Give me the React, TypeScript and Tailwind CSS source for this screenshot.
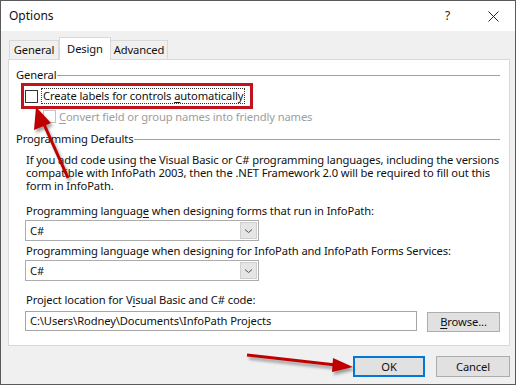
import React from 'react';

function Check({ disabled }: { disabled?: boolean }) {
  return (
    <div
      className={
        disabled
          ? 'w-[13px] h-[13px] shrink-0 border border-[#c4c4c4] bg-white'
          : 'w-[13px] h-[13px] shrink-0 border border-[#333333] bg-white'
      }
    />
  );
}

function GroupHeader({ title }: { title: string }) {
  return (
    <div className="flex items-center h-[14px] pl-[7px] pr-[9px]">
      <span className="whitespace-nowrap">{title}</span>
      <div className="flex-1 h-px bg-[#a0a0a0] ml-[1px]" />
    </div>
  );
}

function Combo({ value }: { value: string }) {
  return (
    <div className="flex items-center w-[234px] h-[21px] ml-[16px] border border-[#acacac] bg-white">
      <span className="flex-1 pl-[4px]">{value}</span>
      <div className="flex items-center justify-center w-[17px] h-[17px] mr-px bg-[#e5e5e5] border border-[#cfcfcf]">
        <svg width="9" height="6" viewBox="0 0 9 6">
          <path d="M1 1.5 L4.5 4.5 L8 1.5" fill="none" stroke="#505050" strokeWidth="1" />
        </svg>
      </div>
    </div>
  );
}

export default function App() {
  return (
    <div className="relative w-[517px] h-[386px] bg-white overflow-hidden font-['Noto_Sans',sans-serif] text-[11.2px] tracking-[-0.12px] leading-none text-[#111]">
      <div className="flex flex-col w-[516px] h-[385px] border border-[#5a5a5a] bg-[#f0f0f0]">
        {/* title bar */}
        <div className="flex items-center h-[30px] bg-white pl-[8px] pr-[16px]">
          <span className="text-[12px] tracking-normal">Options</span>
          <span className="ml-auto mr-[38px] text-[12px] text-[#222]">?</span>
          <svg width="11" height="11" viewBox="0 0 11 11">
            <path d="M0.5 0.5 L10.5 10.5 M10.5 0.5 L0.5 10.5" stroke="#222" strokeWidth="1" />
          </svg>
        </div>

        <div className="flex flex-col px-[7px] pt-[6px]">
          {/* tabs */}
          <div className="flex items-end h-[22px] pl-[1px]">
            <div className="flex items-center justify-center w-[50px] h-[19px] border border-b-0 border-[#d9d9d9] bg-[#f0f0f0]">
              General
            </div>
            <div className="relative z-10 flex items-start justify-center pt-[5px] w-[52px] h-[23px] -mb-px border border-b-0 border-[#d9d9d9] bg-white">
              Design
            </div>
            <div className="flex items-center justify-center w-[57px] h-[19px] border border-b-0 border-l-0 border-[#d9d9d9] bg-[#f0f0f0]">
              Advanced
            </div>
          </div>

          {/* panel */}
          <div className="flex flex-col w-[502px] h-[287px] border border-[#d9d9d9] bg-white">
            <div className="mt-[8px]">
              <GroupHeader title="General" />
            </div>

            <div className="flex items-center w-[232px] h-[26px] ml-[12px] mt-[1px] border-[3px] border-[#c0131b]">
              <div className="ml-px">
                <Check />
              </div>
              <span className="ml-[3px] px-px py-[1px] border border-dotted border-[#333] whitespace-nowrap">
                Create labels for controls <u className="underline-offset-2">a</u>utomatically
              </span>
            </div>

            <div className="flex items-center h-[13px] mt-px ml-[34px] text-[#9d9d9d]">
              <Check disabled />
              <span className="ml-[3px] whitespace-nowrap">
                <u className="underline-offset-2">C</u>onvert field or group names into friendly names
              </span>
            </div>

            <div className="mt-[9px]">
              <GroupHeader title="Programming Defaults" />
            </div>

            <p className="mt-[7px] pl-[17px] leading-[13px] whitespace-nowrap">
              If you add code using the Visual Basic or C# programming languages, including the versions
              <br />
              compatible with InfoPath 2003, then the .NET Framework 2.0 will be required to fill out this
              <br />
              form in InfoPath.
            </p>

            <div className="mt-[13px] h-[13px] pl-[17px] whitespace-nowrap">
              Programming languag<u className="underline-offset-2">e</u> when designing forms that run in InfoPath:
            </div>
            <div className="mt-[2px]">
              <Combo value="C#" />
            </div>

            <div className="mt-[4px] h-[13px] pl-[17px] whitespace-nowrap">
              Programming language when designing for InfoPath and InfoPath Forms Services:
            </div>
            <div className="mt-[2px]">
              <Combo value="C#" />
            </div>

            <div className="mt-[13px] h-[13px] pl-[17px] whitespace-nowrap">
              Project location for V<u className="underline-offset-2">i</u>sual Basic and C# code:
            </div>
            <div className="flex items-start mt-[4px] ml-[16px]">
              <div className="flex items-center w-[392px] h-[20px] pl-[4px] border border-[#a6a6a6] bg-white whitespace-nowrap">
                C:\Users\Rodney\Documents\InfoPath Projects
              </div>
              <div className="flex items-center justify-center w-[73px] h-[20px] mt-px ml-[10px] border border-[#adadad] bg-[#e1e1e1]">
                <span>
                  <u className="underline-offset-2">B</u>rowse...
                </span>
              </div>
            </div>
          </div>

          {/* buttons */}
          <div className="flex justify-end gap-[11px] mt-[10px] w-[502px]">
            <div className="flex items-center justify-center w-[72px] h-[21px] border-2 border-[#0078d7] bg-[#e1e1e1]">
              OK
            </div>
            <div className="flex items-center justify-center w-[74px] h-[21px] border border-[#adadad] bg-[#e1e1e1]">
              Cancel
            </div>
          </div>
        </div>
      </div>

      {/* annotation arrows */}
      <svg className="absolute inset-0 pointer-events-none" width="517" height="386" viewBox="0 0 517 386">
        <defs>
          <filter id="blur" x="-20%" y="-20%" width="140%" height="140%">
            <feGaussianBlur stdDeviation="1.5" />
          </filter>
        </defs>
        <g filter="url(#blur)" opacity="0.45" transform="translate(2 3)">
          <path d="M68 178 L43 122" stroke="#333" strokeWidth="3" />
          <path d="M36 107 L51 123 L34 130 Z" fill="#333" />
          <path d="M247 355 L336 365" stroke="#333" strokeWidth="3" />
          <path d="M353 367 L333 358 L332 372 Z" fill="#333" />
        </g>
        <path d="M68 178 L43 122" stroke="#c00000" strokeWidth="3" />
        <path d="M36 107 L51 123 L34 130 Z" fill="#c00000" />
        <path d="M247 355 L336 365" stroke="#c00000" strokeWidth="3" />
        <path d="M353 367 L333 358 L332 372 Z" fill="#c00000" />
      </svg>
    </div>
  );
}
